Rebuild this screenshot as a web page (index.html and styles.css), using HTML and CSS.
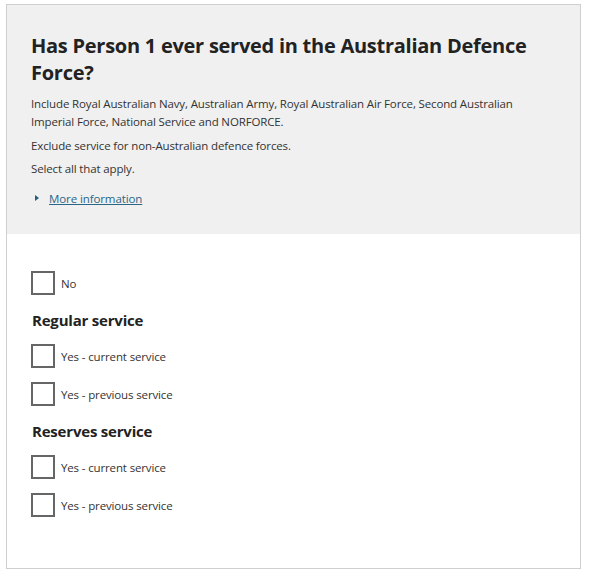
FILE: index.html
```html
<!DOCTYPE html>
<html lang="en">
<head>
<meta charset="utf-8">
<title>Defence service</title>
<link rel="stylesheet" href="styles.css">
</head>
<body>
<div class="card">
  <div class="intro">
    <h1 class="title">Has Person 1 ever served in the Australian Defence Force?</h1>
    <p class="hint">Include Royal Australian Navy, Australian Army, Royal Australian Air Force, Second Australian Imperial Force, National Service and NORFORCE.</p>
    <p class="hint">Exclude service for non-Australian defence forces.</p>
    <p class="hint">Select all that apply.</p>
    <div class="more"><span class="tri"></span><a href="#" class="more-link">More information</a></div>
  </div>
  <div class="options">
    <label class="opt"><span class="box"></span><span class="opt-text">No</span></label>
    <h2 class="group">Regular service</h2>
    <label class="opt"><span class="box"></span><span class="opt-text">Yes - current service</span></label>
    <label class="opt"><span class="box"></span><span class="opt-text">Yes - previous service</span></label>
    <h2 class="group">Reserves service</h2>
    <label class="opt"><span class="box"></span><span class="opt-text">Yes - current service</span></label>
    <label class="opt"><span class="box"></span><span class="opt-text">Yes - previous service</span></label>
  </div>
</div>
</body>
</html>
```
FILE: styles.css
```css
* { box-sizing: border-box; }
body {
  margin: 0;
  background: #fff;
  font-family: "Open Sans", "Noto Sans", sans-serif;
  color: #333;
}
.card {
  margin: 4px 0 0 6px;
  width: 575px;
  height: 565px;
  border: 1px solid #cfcfcf;
  display: flex;
  flex-direction: column;
}
.intro {
  background: #f0f0f0;
  padding: 27px 24px 27px 24px;
}
.title {
  margin: 0 0 9px;
  font-size: 20px;
  line-height: 27px;
  font-weight: 700;
  letter-spacing: -0.26px;
  color: #222;
}
.hint {
  margin: 0 0 5px;
  font-size: 11.5px;
  line-height: 18px;
  letter-spacing: -0.14px;
}
.hint:first-of-type { margin-bottom: 6px; }
.more {
  margin-top: 11px;
  display: flex;
  align-items: center;
  height: 18px;
  font-size: 11.5px;
  letter-spacing: -0.1px;
}
.tri {
  width: 0;
  height: 0;
  border-top: 3.5px solid transparent;
  border-bottom: 3.5px solid transparent;
  border-left: 4px solid #1f5f7a;
  margin: 0 10px 0 4px;
}
.more-link {
  color: #2a6787;
  text-decoration: underline;
}
.options {
  padding: 37px 24px 0 24px;
  display: flex;
  flex-direction: column;
}
.opt {
  display: flex;
  align-items: center;
  gap: 6px;
  height: 24px;
  margin-bottom: 14px;
  font-size: 11.5px;
  letter-spacing: -0.14px;
  color: #333;
}
.box {
  width: 24px;
  height: 24px;
  border: 2px solid #666;
  background: #fff;
  flex: none;
}
.group {
  margin: 1px 0 14px 1px;
  font-size: 15px;
  line-height: 20px;
  font-weight: 700;
  letter-spacing: -0.2px;
  color: #222;
}
```
